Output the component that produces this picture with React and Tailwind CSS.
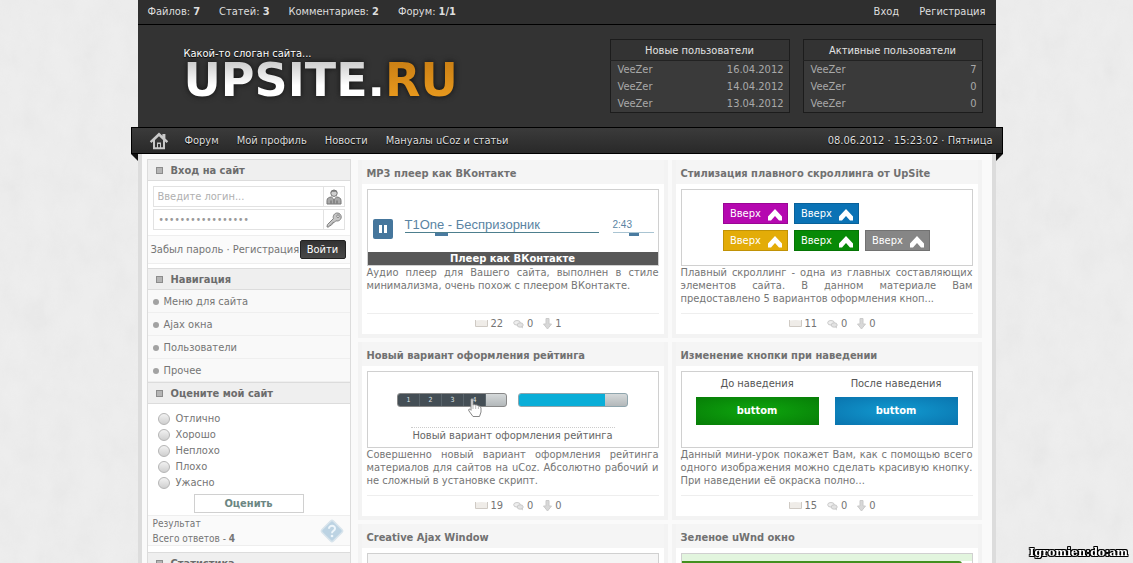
const counters = [['Файлов', '7'], ['Статей', '3'], ['Комментариев', '2'], ['Форум', '1/1']]
const navLinks = ['Форум', 'Мой профиль', 'Новости', 'Мануалы uCoz и статьи']
const menu = ['Меню для сайта', 'Ajax окна', 'Пользователи', 'Прочее']
const answers = ['Отлично', 'Хорошо', 'Неплохо', 'Плохо', 'Ужасно']

function UserTable({ title, rows }) {
  return (
    <table className="w-[180px] border border-[#1c1c1c] bg-[#3a3a3a] leading-[17px] text-[#a9a9a9]">
      <thead>
        <tr>
          <th colSpan={2} className="h-[21px] border-b border-[#222] bg-[#333] font-normal text-[#e2e2e2]">{title}</th>
        </tr>
      </thead>
      <tbody>
        {rows.map(([name, value], i) => (
          <tr key={i}>
            <td className="pl-[7px]">{name}</td>
            <td className="pr-[5px] text-right">{value}</td>
          </tr>
        ))}
      </tbody>
    </table>
  )
}

function HomeIcon() {
  return (
    <svg width="20" height="18" viewBox="0 0 20 18">
      <path d="M10 .5 L.8 9.2 L2.4 11 L4 9.6 V17.2 H16 V9.6 L17.6 11 L19.2 9.2 L16.4 6.5 V2 H13.4 V3.7 Z" fill="#c9c9c9"/>
      <path d="M10 4.2 L6 8 V15.2 H8 V10.5 H12 V15.2 H14 V8 Z" fill="#353535"/>
      <path d="M9 12 H11 V15.2 H9 Z" fill="#353535"/>
    </svg>
  )
}

function UserIcon() {
  return (
    <svg width="16" height="16" viewBox="0 0 16 16">
      <circle cx="8" cy="4.2" r="3.2" fill="#d0d0d0" stroke="#777"/>
      <path d="M4.6 4 C4.6 0 11.4 0 11.4 4 L10 2.8 H6 Z" fill="#777"/>
      <path d="M1 15 V11.5 C1 9 3 8.2 5.5 8 L8 10 L10.5 8 C13 8.2 15 9 15 11.5 V15 Z" fill="#a8a8a8" stroke="#777"/>
      <path d="M8 9.5 V14.5 M5 11.5 V14.5 M11 11.5 V14.5" stroke="#666"/>
      <path d="M6.3 8.5 L8 10 L9.7 8.5" fill="#fff"/>
    </svg>
  )
}

function KeyIcon() {
  return (
    <svg width="16" height="16" viewBox="0 0 16 16">
      <path d="M1 15 L1.4 12.6 L7.4 6.6 C6.6 4 8.3 1 11.2 1 C13.6 1 15.2 2.8 15.2 5 C15.2 7.8 12.6 9.6 9.8 8.8 L8.3 10.4 L6.9 10.4 L6.7 12 L5.3 12 L5 13.5 L3.5 13.6 L2.8 15 Z" fill="#c6c6c6" stroke="#808080"/>
      <circle cx="12" cy="4.2" r="1.3" fill="#fff" stroke="#808080"/>
    </svg>
  )
}

function HelpIcon() {
  return (
    <svg width="26" height="26" viewBox="0 0 26 26">
      <rect x="5" y="5" width="16" height="16" rx="2" transform="rotate(45 13 13)" fill="#bcd3e3" stroke="#d8e4ec" strokeWidth="1.5"/>
      <path d="M10 10.8 C10 6.8 16.2 7 16 10.7 C15.9 12.8 13 12.8 13 15.2" fill="none" stroke="#eef6fb" strokeWidth="2"/>
      <circle cx="13" cy="18" r="1.3" fill="#eef6fb"/>
    </svg>
  )
}

function BookIcon() {
  return (
    <svg width="13" height="10" viewBox="0 0 13 10">
      <path d="M.5 1 V7.5 H12.5 V1" fill="none" stroke="#cfcac4"/>
      <path d="M1 1.5 L6.5 1 L12 1.5 V7 H1 Z" fill="#efece8"/>
    </svg>
  )
}

function CommentsIcon() {
  return (
    <svg width="11" height="10" viewBox="0 0 11 10">
      <ellipse cx="4" cy="3.8" rx="3.3" ry="2.3" fill="#eee" stroke="#cacaca"/>
      <ellipse cx="7.2" cy="6" rx="3" ry="2.2" fill="#e2e2e2" stroke="#cacaca"/>
      <path d="M8 8 L10 9.5 L9.6 7" fill="#cacaca"/>
    </svg>
  )
}

function DownIcon() {
  return (
    <svg width="9" height="12" viewBox="0 0 9 12">
      <path d="M3 .5 H6 V6 H8.5 L4.5 11 L.5 6 H3 Z" fill="#d8d8d8" stroke="#cacaca"/>
    </svg>
  )
}

function Block({ title, children }) {
  return (
    <section>
      <h2 className="flex h-[22px] items-center border-y border-[#dcdcdc] bg-[#efefef] pt-px pl-2 text-[11px] font-bold text-[#6c6c6c]">
        <span className="mr-2 size-[7px] border border-[#8c8c8c] bg-[#b5b5b5]"/>
        {title}
      </h2>
      {children}
    </section>
  )
}

function Card({ title, text, stats, children }) {
  return (
    <article className="border-4 border-t-0 border-[#f3f3f3] bg-white">
      <h2 className="h-6 bg-[#f5f5f5] pl-[5px] text-[11px] leading-[27px] font-bold text-[#717171]">{title}</h2>
      <div className="px-[5px] pt-[5px]">
        <div className="h-[77px] overflow-hidden border border-[#d0d0d0] bg-white">{children}</div>
        {text && <p className="h-[47px] text-justify leading-[13px]">{text}</p>}
        {stats && (
          <div className="flex h-[21px] items-center justify-center border-t border-[#eee] pl-3">
            <BookIcon/><span className="mr-[10px] ml-[2px]">{stats[0]}</span>
            <CommentsIcon/><span className="mr-[10px] ml-[3px]">{stats[1]}</span>
            <DownIcon/><span className="ml-[3px]">{stats[2]}</span>
          </div>
        )}
      </div>
    </article>
  )
}

function UpButton({ color }) {
  return (
    <button className={`flex h-[21px] w-[65px] items-center justify-between border border-black/15 pr-[5px] pl-[6px] text-white ${color}`}>
      Вверх
      <svg className="mt-[2px]" width="14" height="12" viewBox="0 0 14 12">
        <path d="M7 0 L14 7.5 V11.5 H11 L7 7 L3 11.5 H0 V7.5 Z" fill="#fff"/>
      </svg>
    </button>
  )
}

function Player() {
  return (
    <div className="flex h-full flex-col">
      <div className="flex flex-1 items-center gap-3 pt-4 pr-1 pl-[5px]">
        <button className="flex size-5 items-center justify-center gap-[2px] rounded-[2px] bg-[#45769c]" aria-label="Пауза">
          <span className="h-2 w-[3px] bg-white"/>
          <span className="h-2 w-[3px] bg-white"/>
        </button>
        <div className="mb-1 flex flex-1 gap-[14px] font-['Liberation_Sans',sans-serif] text-[#5a84a3]">
          <div className="flex-1">
            <p className="border-b border-[#4d7f8e] text-[13px] leading-[14px]">T1One - Беспризорник</p>
            <div className="ml-[30px] h-[3px] w-[13px] bg-[#4a7ba0]"/>
          </div>
          <div className="w-[41px]">
            <p className="border-b border-[#a9c4d2] text-[10px] leading-[14px]">2:43</p>
            <div className="ml-4 h-[3px] w-[10px] bg-[#4a7ba0]"/>
          </div>
        </div>
      </div>
      <p className="h-[13px] bg-[#585858] text-center font-['DejaVu_Sans',sans-serif] text-[10px] leading-[13px] font-bold text-white">Плеер как ВКонтакте</p>
    </div>
  )
}

function Rating() {
  return (
    <div className="flex h-full flex-col items-center pt-[21px]">
      <div className="flex gap-[11px]">
        <div className="flex h-[14px] w-[110px] overflow-hidden rounded-[3px] border border-[#888] bg-gradient-to-b from-[#d5d9da] to-[#b3b8ba] text-[7px] leading-[13px] text-[#dfe5e8]">
          {['1', '2', '3', '4'].map(n => (
            <span key={n} className="w-[22px] border-r border-[#59646b] bg-[#444e55] text-center">{n}</span>
          ))}
        </div>
        <div className="h-[14px] w-[110px] overflow-hidden rounded-[3px] border border-[#8fa5ad] bg-gradient-to-b from-[#d5d9da] to-[#b3b8ba]">
          <div className="h-full w-4/5 bg-[#0aaed8]"/>
        </div>
      </div>
      <div className="relative mt-[20px] w-[204px] border-t border-dotted border-[#ccc] text-center text-[#666]">
        <svg className="absolute -top-[30px] left-[56px]" width="16" height="20" viewBox="0 0 16 20">
          <path d="M4 1.5 C4 .5 6 .5 6 1.5 V7 L7 6.5 L8.5 7 L10 7 L11.5 8 L13 8.2 L14 10 V14 L12.5 18.5 H6 L2 13 C1 11.5 2 10.8 3 11.3 L4 12.3 Z" fill="#fff" stroke="#888"/>
          <path d="M6 7 V11 M8.7 7.5 V11 M11.4 8 V11" stroke="#bbb"/>
        </svg>
        Новый вариант оформления рейтинга
      </div>
    </div>
  )
}

export default function App() {
  return (
    <div className="relative h-screen overflow-hidden bg-[#eeeeee] font-['DejaVu_Sans_Condensed','DejaVu_Sans',sans-serif] text-[11px] leading-4 text-[#757575]">
      {/* paper texture */}
      <svg className="absolute inset-0 h-full w-full opacity-8">
        <filter id="paper">
          <feTurbulence type="fractalNoise" baseFrequency="0.04 0.03" numOctaves="5"/>
          <feColorMatrix type="saturate" values="0"/>
        </filter>
        <rect width="100%" height="100%" filter="url(#paper)"/>
      </svg>

      <div className="relative mx-auto max-w-[858px]">
        <header className="bg-[#333] text-[#dedede]">
          <div className="flex h-[25px] items-center justify-between border-b border-black bg-[#2f2f2f] px-[10px]">
            <div className="flex gap-[19px]">
              {counters.map(([label, value]) => <span key={label}>{label}: <b>{value}</b></span>)}
            </div>
            <div className="flex gap-5">
              <a href="#login">Вход</a>
              <a href="#register">Регистрация</a>
            </div>
          </div>
          <div className="flex h-[102px] justify-between pt-[14px] pr-[13px] pl-[46px]">
            <div className="pt-[7px]">
              <p className="text-white [text-shadow:0_1px_1px_#000]">Какой-то слоган сайта...</p>
              <h1 className="font-['DejaVu_Sans',sans-serif] text-[46px] leading-9 font-bold drop-shadow-[0_0_3px_#111]">
                <span className="bg-gradient-to-b from-[#bbb] to-white to-60% bg-clip-text text-transparent">UPSITE.</span>
                <span className="bg-gradient-to-b from-[#c47a12] to-[#f0a020] bg-clip-text text-transparent">RU</span>
              </h1>
            </div>
            <div className="flex items-start gap-[13px]">
              <UserTable title="Новые пользователи" rows={[['VeeZer', '16.04.2012'], ['VeeZer', '14.04.2012'], ['VeeZer', '13.04.2012']]}/>
              <UserTable title="Активные пользователи" rows={[['VeeZer', '7'], ['VeeZer', '0'], ['VeeZer', '0']]}/>
            </div>
          </div>
        </header>

        <nav className="relative -mx-[7px] flex h-[27px] items-center border border-black bg-gradient-to-b from-[#3b3b3b] to-[#292929] pr-[9px] pl-[17px] text-[#dedede] [text-shadow:0_1px_1px_#000]">
          <a href="#home" aria-label="Главная"><HomeIcon/></a>
          <div className="ml-4 flex gap-[18px]">
            {navLinks.map(l => <a key={l} href="#nav">{l}</a>)}
          </div>
          <span className="ml-auto">08.06.2012 · 15:23:02 · Пятница</span>
          <svg className="absolute top-[26px] -left-px" width="7" height="7"><path d="M0 0 H7 V7 Z" fill="#111"/></svg>
          <svg className="absolute top-[26px] -right-px" width="7" height="7"><path d="M0 0 H7 L0 7 Z" fill="#111"/></svg>
        </nav>

        <main className="flex gap-[7px] border-x-4 border-[#dcdcdc] bg-[#fafafa] pt-[5px] pr-[10px] pl-[5px]">
          <aside className="w-[204px] shrink-0 border-x border-[#dcdcdc] bg-white">
            <Block title="Вход на сайт">
              <form onSubmit={e => e.preventDefault()}>
                <div className="space-y-[2px] px-[5px] pt-[5px] pb-[5px]">
                  <label className="flex h-[21px] border border-[#e2e2e2]">
                    <input className="min-w-0 flex-1 pt-px pl-1 outline-none placeholder:text-[#b0b0b0]" placeholder="Введите логин..." aria-label="Логин"/>
                    <span className="flex w-[21px] items-center justify-center border-l border-[#e2e2e2]"><UserIcon/></span>
                  </label>
                  <label className="flex h-[21px] border border-[#e2e2e2]">
                    <input type="password" defaultValue="12345678901234567" className="min-w-0 flex-1 pt-px pl-[5px] text-[10px] text-[#999] outline-none" aria-label="Пароль"/>
                    <span className="flex w-[21px] items-center justify-center border-l border-[#e2e2e2]"><KeyIcon/></span>
                  </label>
                </div>
                <div className="mb-[4px] flex h-[29px] items-center justify-between border-y border-[#eee] bg-[#fbfbfb] pr-1 pl-[3px] whitespace-nowrap">
                  <span><a href="#forgot">Забыл пароль</a> · <a href="#register">Регистрация</a></span>
                  <button className="h-[19px] w-[46px] rounded-[2px] border border-[#222] bg-gradient-to-b from-[#333] to-[#484848] text-white">Войти</button>
                </div>
              </form>
            </Block>
            <Block title="Навигация">
              <ul className="bg-[#f9f9f9]">
                {menu.map(m => (
                  <li key={m} className="flex h-[23px] items-center border-b border-[#efefef] pt-px pl-[5px]">
                    <span className="mr-[5px] size-[6px] rounded-full bg-[#a2a2a2]"/>
                    <a href="#menu">{m}</a>
                  </li>
                ))}
              </ul>
            </Block>
            <Block title="Оцените мой сайт">
              <form className="pt-[7px]" onSubmit={e => e.preventDefault()}>
                {answers.map(a => (
                  <label key={a} className="flex h-4 items-center gap-[6px] pl-[10px]">
                    <input type="radio" name="rate" className="size-3 appearance-none rounded-full border border-[#b5b5b5] bg-gradient-to-b from-[#f2f2f2] to-[#cfcfcf]"/>
                    {a}
                  </label>
                ))}
                <button className="mx-auto mt-[3px] block h-[19px] w-[110px] border border-[#d0d0d0] leading-4 font-bold text-[#6c8683]">Оценить</button>
                <div className="mt-[2px] mb-[6px] flex h-[31px] items-center justify-between border-y border-[#eee] bg-[#fafafa] px-[5px] text-[10px] leading-[15px]">
                  <p>Результат<br/>Всего ответов - <b>4</b></p>
                  <HelpIcon/>
                </div>
              </form>
            </Block>
            <Block title="Статистика"/>
          </aside>

          <div className="grid flex-1 grid-cols-2 gap-x-1 gap-y-1 self-start pt-px">
            <Card title="MP3 плеер как ВКонтакте" stats={[22, 0, 1]}
              text="Аудио плеер для Вашего сайта, выполнен в стиле минимализма, очень похож с плеером ВКонтакте.">
              <Player/>
            </Card>
            <Card title="Стилизация плавного скроллинга от UpSite" stats={[11, 0, 0]}
              text="Плавный скроллинг - одна из главных составляющих элементов сайта. В данном материале Вам предоставлено 5 вариантов оформления кноп...">
              <div className="mx-auto mt-[13px] grid w-[207px] grid-cols-3 gap-[6px]">
                <UpButton color="bg-[#b508b0]"/>
                <UpButton color="bg-[#0a72b5]"/>
                <span/>
                <UpButton color="bg-[#e3ac08]"/>
                <UpButton color="bg-[#078a07]"/>
                <UpButton color="bg-[#868686]"/>
              </div>
            </Card>
            <Card title="Новый вариант оформления рейтинга" stats={[19, 0, 0]}
              text="Совершенно новый вариант оформления рейтинга материалов для сайтов на uCoz. Абсолютно рабочий и не сложный в установке скрипт.">
              <Rating/>
            </Card>
            <Card title="Изменение кнопки при наведении" stats={[15, 0, 0]}
              text="Данный мини-урок покажет Вам, как с помощью всего одного изображения можно сделать красивую кнопку. При наведении её окраска полно...">
              <div className="flex justify-center gap-4 pt-1 text-center text-[#555]">
                <div>
                  <p>До наведения</p>
                  <button className="mt-[5px] h-7 w-[123px] bg-radial from-[#0ea60e] to-[#077d07] font-bold text-white">buttom</button>
                </div>
                <div>
                  <p>После наведения</p>
                  <button className="mt-[5px] h-7 w-[123px] bg-radial from-[#129ad0] to-[#0a74ae] font-bold text-white">buttom</button>
                </div>
              </div>
            </Card>
            <Card title="Creative Ajax Window">
              <div className="h-full bg-[#f5f5f5]"/>
            </Card>
            <Card title="Зеленое uWnd окно">
              <div className="h-full border-t-[7px] border-[#e2f5de]">
                <div className="mr-[10px] h-full rounded-tr-[3px] bg-[#43901f]"/>
              </div>
            </Card>
          </div>
        </main>
      </div>

      <p className="fixed right-[5px] bottom-[2px] font-['DejaVu_Serif',serif] text-[11px] font-bold text-white [text-shadow:1px_0_#000,-1px_0_#000,0_1px_#000,0_-1px_#000,1px_1px_#000,-1px_-1px_#000,1px_-1px_#000,-1px_1px_#000]">Igromien:do:am</p>
    </div>
  )
}
